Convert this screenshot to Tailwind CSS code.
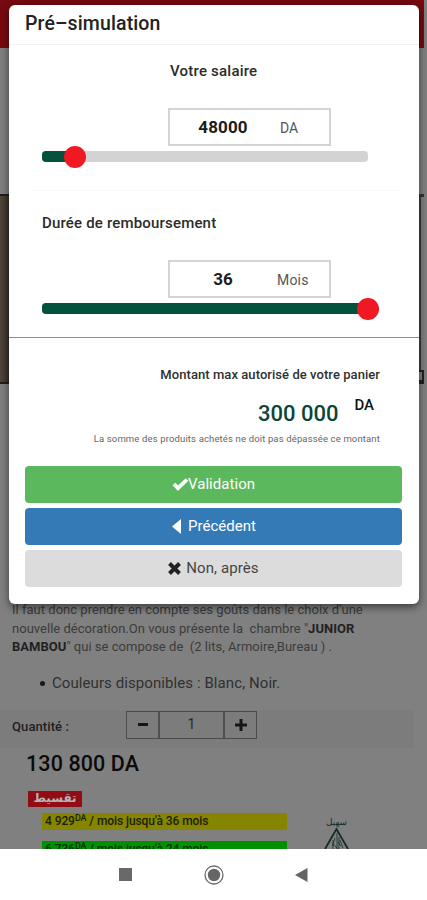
<!DOCTYPE html>
<html lang="fr">
<head>
<meta charset="utf-8">
<title>Pré-simulation</title>
<script src="https://cdn.jsdelivr.net/npm/@tailwindcss/browser@4"></script>
</head>
<body class="font-['Roboto','Noto_Sans',sans-serif] bg-white">
<div class="relative flex h-[900px] w-[427px] flex-col overflow-hidden whitespace-nowrap text-[#262626]">
  <!-- Dimmed product page -->
  <main class="flex h-[849px] shrink-0 flex-col overflow-hidden bg-[#808080]">
    <div class="mr-[3px] h-[48px] shrink-0 bg-[#760a10]"></div>
    <div class="h-[146px] shrink-0"></div>
    <div class="flex h-[190px] shrink-0 justify-between">
      <div class="w-[12px] border-y-2 border-[#251b1b] bg-linear-to-r from-[#51463a] via-[#43392f] to-[#211a19]"></div>
      <div class="flex w-[10px] flex-col justify-between">
        <div class="h-[3px] w-[7px] bg-[#333]"></div>
        <div class="w-[4px] grow bg-[#42403d]"></div>
        <div class="h-[14px] w-[7px] border-2 border-b-4 border-[#222]"></div>
      </div>
    </div>
    <p class="h-[56px] shrink-0 mt-[217px] pl-[12px] text-[13px] leading-[18.7px] tracking-[0.02px] text-[#3b3b3b]">
      <span class="block">Il faut donc prendre en compte ses goûts dans le choix d'une</span>
      <span class="block">nouvelle décoration.On vous présente la&nbsp; chambre "<b class="text-[#222]">JUNIOR</b></span>
      <span class="block"><b class="text-[#222]">BAMBOU</b>" qui se compose de&nbsp; (2 lits, Armoire,Bureau ) .</span>
    </p>
    <div class="mt-[16px] flex h-[20px] shrink-0 items-center pl-[40px] text-[15px] text-[#303030]">
      <span class="mr-[7px] size-[5px] rounded-full bg-[#181818]"></span>
      <span class="tracking-[0.08px]">Couleurs disponibles : Blanc, Noir.</span>
    </div>
    <div class="mr-[13px] mt-[17px] flex h-[38px] shrink-0 items-center bg-[#7c7c7c] pl-[12px]">
      <span class="-mt-[5px] w-[114px] text-[13px] font-medium tracking-[0.1px] text-[#202020]">Quantité :</span>
      <div class="-mt-[9px] flex h-[28px] border border-[#4c4c4c]">
        <span class="flex w-[31px] items-center justify-center"><span class="h-[3px] w-[10px] bg-[#161616]"></span></span>
        <span class="flex w-[67px] items-center justify-center border-x-2 border-[#505050] text-[14px]">1</span>
        <span class="flex w-[31px] items-center justify-center"><svg class="size-[12px]" viewBox="0 0 12 12"><path d="M6 0v12M0 6h12" stroke="#161616" stroke-width="3"/></svg></span>
      </div>
    </div>
    <div class="mt-[1px] h-[31px] shrink-0 pl-[26px] text-[21.5px] leading-[30px] font-medium tracking-[0.1px] text-[#0b0b0b]">130 800 DA</div>
    <div class="mt-[11px] flex h-[60px] shrink-0">
      <div class="w-[287px]">
        <div class="ml-[28px] flex h-[16px] w-[54px] items-center justify-center bg-[#920d13] pb-[3px] font-['DejaVu_Sans','Noto_Sans',sans-serif] text-[12px] leading-[12px] font-bold text-[#b5b5b5]" lang="ar" dir="rtl">تقسيط</div>
        <div class="ml-[42px] mt-[6px] h-[17px] bg-[#858500] pl-[3px] text-[12px] leading-[16px] font-medium tracking-[-0.08px] text-[#202008]">4 929<span class="relative -top-[4px] text-[9px]">DA</span> / mois jusqu'à 36 mois</div>
        <div class="ml-[42px] mt-[11px] h-[17px] bg-[#009100] pl-[3px] text-[12px] leading-[17px] font-medium tracking-[-0.08px] text-[#043004]">6 736<span class="relative -top-[4px] text-[9px]">DA</span> / mois jusqu'à 24 mois</div>
      </div>
      <div class="ml-[37px] mt-[24px] flex w-[25px] flex-col items-center text-[#102c28]">
        <span class="h-[12px] font-['DejaVu_Sans',sans-serif] text-[9px] leading-[14px]" lang="ar" dir="rtl">سهيل</span>
        <svg class="h-[24px] w-[25px] shrink-0" viewBox="0 0 25 24" fill="none" stroke="currentColor"><path d="M1 22L12.5 2L24 22" stroke-width="1.8"/><path d="M13 6v16M9 13v9M11 11l-2 6M15 10v12M8 18h3M14 15l3 4M16 13l3 8M11 19l3 3" stroke-width=".8"/></svg>
      </div>
    </div>
  </main>

  <!-- System navigation -->
  <nav class="flex h-[51px] shrink-0 items-center bg-white pl-[119px]">
    <span class="size-[13px] bg-[#696969]"></span>
    <svg class="ml-[72px] size-[20px]" viewBox="0 0 20 20"><circle cx="10" cy="10" r="9" fill="none" stroke="#6b6b6b" stroke-width="1.3"/><circle cx="10" cy="10" r="6.2" fill="#666"/></svg>
    <svg class="ml-[70px] h-[14px] w-[14px]" viewBox="0 0 14 14"><path d="M13.5 0v14L1 7z" fill="#646464"/></svg>
  </nav>

  <!-- Dialog -->
  <section class="absolute left-[9px] top-[5px] flex h-[599px] w-[410px] flex-col rounded-[6px] bg-white shadow-[0_3px_8px_rgba(0,0,0,0.55)]">
    <h1 class="h-[40px] shrink-0 border-b border-[#f1f1f1] pl-[16px] text-[19.5px] leading-[38px] font-medium tracking-[0.12px] text-[#222]">Pré–simulation</h1>
    <div class="mx-[20px] flex h-[146px] shrink-0 flex-col border-b border-[#f9f9f9] px-[13px]">
      <div class="mt-[16px] h-[20px] pl-[128px] text-[15px] leading-[20px] font-medium tracking-[0.22px] text-[#2b2b2b]">Votre salaire</div>
      <div class="ml-[126px] mt-[27px] flex h-[38px] w-[163px] shrink-0 items-center border-2 border-[#d4d4d4]">
        <span class="w-[106px] pt-[1px] text-center text-[17px] font-bold tracking-[0.1px] text-[#1c1c1c]">48000</span>
        <span class="ml-[4px] pt-[3px] text-[14px] text-[#555]">DA</span>
      </div>
      <div class="mt-[5px] flex h-[11px] w-[326px] shrink-0 items-center rounded-[4px] bg-[#d3d3d3]">
        <span class="h-[11px] w-[33px] rounded-l-[4px] bg-[#04523d]"></span>
        <span class="-ml-[11px] size-[22px] shrink-0 rounded-full bg-[#f01822]"></span>
      </div>
    </div>
    <div class="flex h-[147px] shrink-0 flex-col border-b border-[#8d8d8d] px-[33px]">
      <div class="mt-[22px] h-[20px] text-[15px] leading-[20px] font-medium tracking-[0.18px] text-[#2b2b2b]">Durée de remboursement</div>
      <div class="ml-[126px] mt-[27px] flex h-[38px] w-[163px] shrink-0 items-center border-2 border-[#d4d4d4]">
        <span class="w-[106px] pt-[1px] text-center text-[17px] font-bold text-[#1c1c1c]">36</span>
        <span class="ml-[1px] pt-[3px] text-[14px] tracking-[0.2px] text-[#555]">Mois</span>
      </div>
      <div class="mt-[5px] flex h-[11px] w-[326px] shrink-0 items-center rounded-[4px] bg-[#d3d3d3]">
        <span class="h-[11px] w-[326px] shrink-0 rounded-l-[4px] bg-[#04523d]"></span>
        <span class="-ml-[11px] size-[22px] shrink-0 rounded-full bg-[#f01822]"></span>
      </div>
    </div>
    <div class="flex h-[128px] shrink-0 flex-col items-end pr-[39px]">
      <div class="mt-[28px] h-[18px] text-[13px] leading-[18px] font-medium tracking-[0.06px] text-[#303030]">Montant max autorisé de votre panier</div>
      <div class="mt-[16px] flex h-[28px] pr-[6px]">
        <span class="text-[22px] leading-[28px] font-medium text-[#0b4535]">300 000</span>
        <span class="ml-[16px] text-[15px] leading-[10px] font-medium text-[#111]">DA</span>
      </div>
      <div class="mt-[4px] h-[14px] text-[9.5px] leading-[14px] tracking-[0.14px] text-[#666]">La somme des produits achetés ne doit pas dépassée ce montant</div>
    </div>
    <div class="flex flex-col gap-[5px] pl-[16px] pr-[17px] text-[15px]">
      <button class="flex h-[37px] items-center justify-center rounded-[4px] bg-[#5cb85c] text-white"><svg class="h-[13px] w-[17px]" viewBox="0 0 17 13"><path d="M2 6l4 4.2L15 1.5" fill="none" stroke="#fff" stroke-width="3.8"/></svg><span class="-ml-[1px] tracking-[0.05px]">Validation</span></button>
      <button class="flex h-[37px] items-center justify-center rounded-[4px] bg-[#337ab7] pl-[1px] text-white"><svg class="mr-[7px] h-[15px] w-[9px]" viewBox="0 0 9 15"><path d="M9 0v15L0 7.5z" fill="#fff"/></svg><span>Précédent</span></button>
      <button class="flex h-[37px] items-center justify-center rounded-[4px] bg-[#dcdcdc] text-[#444]"><svg class="mr-[5px] size-[13px]" viewBox="0 0 13 13"><path d="M1.5 1.5l10 10M11.5 1.5l-10 10" stroke="#222" stroke-width="4"/></svg><span class="tracking-[0.1px]">Non, après</span></button>
    </div>
  </section>
</div>
</body>
</html>
